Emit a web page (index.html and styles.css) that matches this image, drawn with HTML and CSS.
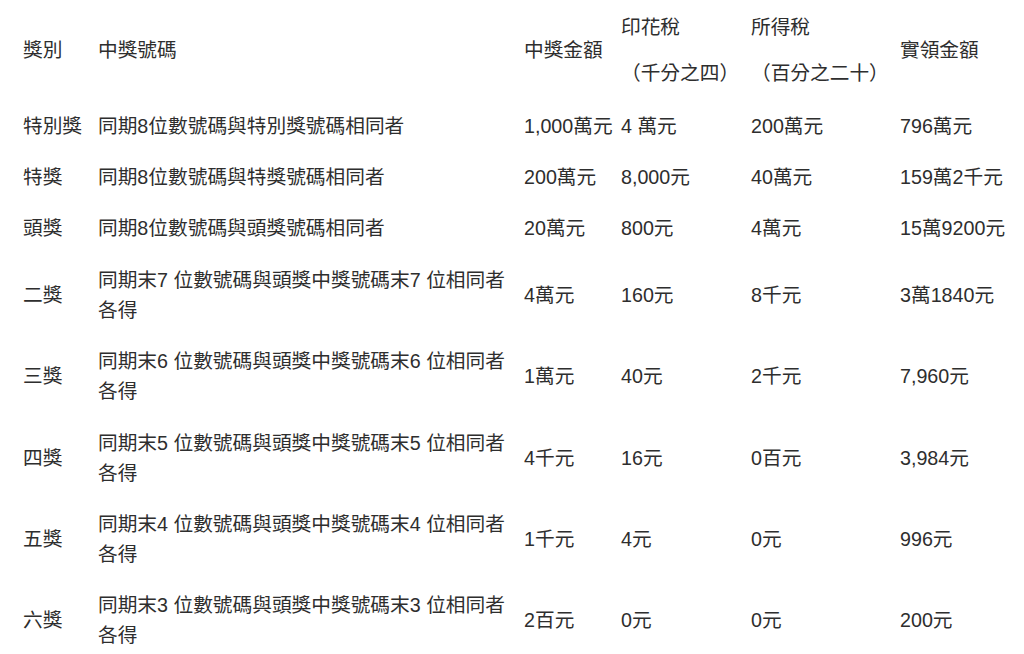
FILE: index.html
```html
<!DOCTYPE html>
<html lang="zh-Hant">
<head>
<meta charset="utf-8">
<title>統一發票獎別</title>
<link rel="stylesheet" href="styles.css">
</head>
<body>
<table class="prize-table">
  <colgroup>
    <col class="c-type">
    <col class="c-rule">
    <col class="c-amount">
    <col class="c-stamp">
    <col class="c-income">
    <col class="c-net">
  </colgroup>
  <thead>
    <tr>
      <th>獎別</th>
      <th>中獎號碼</th>
      <th>中獎金額</th>
      <th><div class="h-line">印花稅</div><div class="h-line h-sub">（千分之四）</div></th>
      <th><div class="h-line">所得稅</div><div class="h-line h-sub">（百分之二十）</div></th>
      <th>實領金額</th>
    </tr>
  </thead>
  <tbody>
    <tr>
      <td>特別獎</td>
      <td>同期8位數號碼與特別獎號碼相同者</td>
      <td>1,000萬元</td>
      <td>4 萬元</td>
      <td>200萬元</td>
      <td>796萬元</td>
    </tr>
    <tr>
      <td>特獎</td>
      <td>同期8位數號碼與特獎號碼相同者</td>
      <td>200萬元</td>
      <td>8,000元</td>
      <td>40萬元</td>
      <td>159萬2千元</td>
    </tr>
    <tr>
      <td>頭獎</td>
      <td>同期8位數號碼與頭獎號碼相同者</td>
      <td>20萬元</td>
      <td>800元</td>
      <td>4萬元</td>
      <td>15萬9200元</td>
    </tr>
    <tr>
      <td>二獎</td>
      <td>同期末7 位數號碼與頭獎中獎號碼末7 位相同者各得</td>
      <td>4萬元</td>
      <td>160元</td>
      <td>8千元</td>
      <td>3萬1840元</td>
    </tr>
    <tr>
      <td>三獎</td>
      <td>同期末6 位數號碼與頭獎中獎號碼末6 位相同者各得</td>
      <td>1萬元</td>
      <td>40元</td>
      <td>2千元</td>
      <td>7,960元</td>
    </tr>
    <tr>
      <td>四獎</td>
      <td>同期末5 位數號碼與頭獎中獎號碼末5 位相同者各得</td>
      <td>4千元</td>
      <td>16元</td>
      <td>0百元</td>
      <td>3,984元</td>
    </tr>
    <tr>
      <td>五獎</td>
      <td>同期末4 位數號碼與頭獎中獎號碼末4 位相同者各得</td>
      <td>1千元</td>
      <td>4元</td>
      <td>0元</td>
      <td>996元</td>
    </tr>
    <tr>
      <td>六獎</td>
      <td>同期末3 位數號碼與頭獎中獎號碼末3 位相同者各得</td>
      <td>2百元</td>
      <td>0元</td>
      <td>0元</td>
      <td>200元</td>
    </tr>
  </tbody>
</table>
</body>
</html>
```

FILE: styles.css
```css
html, body {
  margin: 0;
  padding: 0;
  background: #ffffff;
}

body {
  font-family: "Liberation Sans", "Noto Sans CJK TC", sans-serif;
  font-size: 19.7px;
  line-height: 30px;
  color: #2e2e2e;
}

.prize-table {
  width: 1024px;
  border-collapse: collapse;
  table-layout: fixed;
}

.c-type { width: 98px; }
.c-rule { width: 426px; }
.c-amount { width: 97px; }
.c-stamp { width: 130px; }
.c-income { width: 149px; }
.c-net { width: 124px; }

.prize-table th,
.prize-table td {
  padding: 10.7px 0;
  text-align: left;
  vertical-align: middle;
  font-weight: normal;
}

.prize-table th {
  padding-top: 12px;
  padding-bottom: 12px;
}

.prize-table th:first-child,
.prize-table td:first-child {
  padding-left: 23px;
}

.prize-table td:nth-child(2) {
  padding-right: 10px;
}

.h-sub {
  margin-top: 16px;
}
```
